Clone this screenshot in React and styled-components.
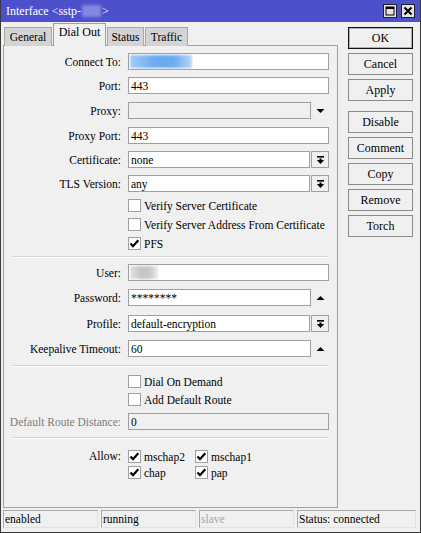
import React from 'react';
import styled, { createGlobalStyle, css } from 'styled-components';

const Global = createGlobalStyle`
  html, body { margin: 0; padding: 0; background: #f0f0f0; }
  body {
    font-family: "Liberation Serif", "Times New Roman", serif;
    font-size: 11.5px;
    color: #000;
  }
  * { box-sizing: border-box; }
`;

const Window = styled.div`
  width: 421px;
  height: 533px;
  border: 1px solid #3a3a3a;
  border-top: 0;
  background: #f0f0f0;
  display: flex;
  flex-direction: column;
`;

const TitleBar = styled.div`
  height: 22px;
  flex: none;
  background: #4d50cb;
  color: #fff;
  font-size: 12px;
  display: flex;
  align-items: center;
  padding: 0 5px 0 5px;
`;

const TitleText = styled.div`
  flex: 1;
  display: flex;
  align-items: center;
  white-space: pre;
`;

const TitleBlur = styled.span`
  display: inline-block;
  width: 19px;
  height: 12px;
  background: #8487e2;
  filter: blur(1.5px);
  margin: 0 1px;
`;

const TitleButtons = styled.div`
  display: flex;
  gap: 4px;
`;

const TitleButton = styled.div`
  width: 14px;
  height: 14px;
  background: #e4e4e4;
  border: 1px solid #222;
  display: flex;
  align-items: center;
  justify-content: center;
`;

const Main = styled.div`
  display: flex;
  flex: none;
  height: 486px;
`;

const LeftCol = styled.div`
  margin-left: 2px;
  width: 335px;
  display: flex;
  flex-direction: column;
`;

const Tabs = styled.div`
  display: flex;
  align-items: flex-end;
  height: 23px;
  margin-top: 1px;
  padding-left: 1px;
  position: relative;
  z-index: 1;
  margin-bottom: -1px;
`;

const Tab = styled.div`
  height: 19px;
  width: ${(p) => p.$w}px;
  display: flex;
  align-items: center;
  justify-content: center;
  white-space: nowrap;
  background: #d4d4d4;
  border: 1px solid #a8a8a8;
  border-bottom: 0;
  margin-right: 1px;
  ${(p) =>
    p.$active &&
    css`
      height: 23px;
      background: #f0f0f0;
      border-color: #a0a0a0;
      padding-bottom: 5px;
      font-size: 12px;
    `}
`;

const Panel = styled.div`
  flex: 1;
  border: 1px solid #a0a0a0;
  padding: 7px 0 0 0;
  display: flex;
  flex-direction: column;
`;

const Row = styled.div`
  display: flex;
  align-items: center;
  height: ${(p) => p.$h || 17}px;
  margin-top: ${(p) => p.$mt || 0}px;
`;

const Label = styled.div`
  width: 117px;
  text-align: right;
  margin-right: 7px;
  white-space: nowrap;
  color: ${(p) => (p.$disabled ? '#7d7d7d' : '#000')};
`;

const Spacer = styled.div`
  width: 124px;
  flex: none;
`;

const Input = styled.div`
  position: relative;
  width: ${(p) => p.$w || 201}px;
  height: 17px;
  border: 1px solid #a0a0a0;
  background: ${(p) => (p.$disabled ? '#f0f0f0' : '#fff')};
  padding-left: 2px;
  display: flex;
  align-items: center;
  white-space: nowrap;
  overflow: hidden;
`;

const BlurBlob = styled.div`
  position: absolute;
  left: 1px;
  top: 1px;
  height: 13px;
  width: ${(p) => p.$w}px;
  background: ${(p) => p.$bg};
  filter: blur(1px);
`;

const DropButton = styled.div`
  width: 18px;
  height: 17px;
  margin-left: 1px;
  border: 1px solid #a0a0a0;
  background: #f0f0f0;
  display: flex;
  align-items: center;
  justify-content: center;
`;

const ArrowSlot = styled.div`
  width: 18px;
  height: 17px;
  display: flex;
  align-items: center;
  justify-content: center;
`;

const Box = styled.div`
  width: 13px;
  height: 13px;
  border: 1px solid #a0a0a0;
  background: #fff;
  flex: none;
  display: flex;
  align-items: center;
  justify-content: center;
`;

const CheckText = styled.span`
  margin-left: 3px;
  white-space: nowrap;
`;

const CheckItem = styled.div`
  display: flex;
  align-items: center;
  height: 13px;
`;

const Separator = styled.div`
  margin: ${(p) => p.$mt}px 0 0 8px;
  width: 317px;
  height: 2px;
  border-top: 1px solid #d6d6d6;
  border-bottom: 1px solid #fbfbfb;
`;

const AllowGrid = styled.div`
  display: grid;
  grid-template-columns: 67px auto;
  row-gap: 3px;
`;

const AllowRow = styled.div`
  display: flex;
  align-items: flex-start;
  margin-top: ${(p) => p.$mt}px;
`;

const AllowLabel = styled(Label)`
  height: 13px;
  line-height: 13px;
`;

const RightCol = styled.div`
  padding: 5px 0 0 10px;
  display: flex;
  flex-direction: column;
`;

const Button = styled.div`
  width: 65px;
  height: 22px;
  margin-bottom: ${(p) => p.$mb ?? 4}px;
  border: 1px solid #8a8a8a;
  background: #f0f0f0;
  display: flex;
  align-items: center;
  justify-content: center;
  font-size: 12px;
  ${(p) =>
    p.$default &&
    css`
      border-color: #111;
      box-shadow: inset 0 0 0 1px #b0b0b0;
    `}
`;

const StatusBar = styled.div`
  display: flex;
  gap: 3px;
  margin-top: 2px;
  padding-left: 2px;
`;

const StatusCell = styled.div`
  width: ${(p) => p.$w}px;
  height: 18px;
  border-top: 1px solid #a8a8a8;
  border-left: 1px solid #a8a8a8;
  border-right: 1px solid #e2e2e2;
  border-bottom: 1px solid #e2e2e2;
  padding-left: 1px;
  display: flex;
  align-items: center;
  white-space: nowrap;
  color: ${(p) => (p.$muted ? '#a6a6a6' : '#000')};
`;

const Check = () => (
  <svg width="11" height="11" viewBox="0 0 11 11">
    <path d="M1.5 5.5 L4 8.2 L9.3 2.3" fill="none" stroke="#000" strokeWidth="2.2" />
  </svg>
);

const CheckBox = ({ checked, label }) => (
  <CheckItem>
    <Box>{checked && <Check />}</Box>
    <CheckText>{label}</CheckText>
  </CheckItem>
);

const DropIcon = () => (
  <svg width="9" height="10" viewBox="0 0 9 10">
    <rect x="1" y="1" width="7" height="1.6" fill="#000" />
    <rect x="3.5" y="3.5" width="2" height="2" fill="#000" />
    <polygon points="0.8,5 8.2,5 4.5,9" fill="#000" />
  </svg>
);

const TriDown = () => (
  <svg width="9" height="6" viewBox="0 0 9 6">
    <polygon points="0.5,1 8.5,1 4.5,5" fill="#000" />
  </svg>
);

const TriUp = () => (
  <svg width="9" height="6" viewBox="0 0 9 6">
    <polygon points="0.5,5 8.5,5 4.5,1" fill="#000" />
  </svg>
);

const MaxIcon = () => (
  <svg width="10" height="10" viewBox="0 0 10 10">
    <rect x="1" y="1" width="8" height="8" fill="none" stroke="#000" strokeWidth="1" />
    <rect x="1" y="1" width="8" height="2" fill="#000" />
  </svg>
);

const CloseIcon = () => (
  <svg width="10" height="10" viewBox="0 0 10 10">
    <path d="M1.5 1.5 L8.5 8.5 M8.5 1.5 L1.5 8.5" stroke="#000" strokeWidth="2" />
  </svg>
);

export default function App() {
  return (
    <>
      <Global />
      <Window>
        <TitleBar>
          <TitleText>
            Interface &lt;sstp-<TitleBlur />&gt;
          </TitleText>
          <TitleButtons>
            <TitleButton><MaxIcon /></TitleButton>
            <TitleButton><CloseIcon /></TitleButton>
          </TitleButtons>
        </TitleBar>
        <Main>
          <LeftCol>
            <Tabs>
              <Tab $w={48}>General</Tab>
              <Tab $w={53} $active>Dial Out</Tab>
              <Tab $w={37}>Status</Tab>
              <Tab $w={43}>Traffic</Tab>
            </Tabs>
            <Panel>
              <Row>
                <Label>Connect To:</Label>
                <Input>
                  <BlurBlob $w={62} $bg="linear-gradient(90deg,#a6cdf6,#6aaaf0 40%,#6aaaf0 70%,#b8d7f8)" />
                </Input>
              </Row>
              <Row $mt={7}>
                <Label>Port:</Label>
                <Input>443</Input>
              </Row>
              <Row $mt={8}>
                <Label>Proxy:</Label>
                <Input $w={183} $disabled />
                <ArrowSlot><TriDown /></ArrowSlot>
              </Row>
              <Row $mt={8}>
                <Label>Proxy Port:</Label>
                <Input>443</Input>
              </Row>
              <Row $mt={7}>
                <Label>Certificate:</Label>
                <Input $w={182}>none</Input>
                <DropButton><DropIcon /></DropButton>
              </Row>
              <Row $mt={7}>
                <Label>TLS Version:</Label>
                <Input $w={182}>any</Input>
                <DropButton><DropIcon /></DropButton>
              </Row>
              <Row $mt={7} $h={13}>
                <Spacer />
                <CheckBox label="Verify Server Certificate" />
              </Row>
              <Row $mt={6} $h={13}>
                <Spacer />
                <CheckBox label="Verify Server Address From Certificate" />
              </Row>
              <Row $mt={6} $h={13}>
                <Spacer />
                <CheckBox checked label="PFS" />
              </Row>
              <Separator $mt={6} />
              <Row $mt={6}>
                <Label>User:</Label>
                <Input>
                  <BlurBlob $w={28} $bg="linear-gradient(90deg,#e2e2e2,#c4c4c4 40%,#c8c8c8 70%,#ececec)" />
                </Input>
              </Row>
              <Row $mt={8}>
                <Label>Password:</Label>
                <Input $w={183}>********</Input>
                <ArrowSlot><TriUp /></ArrowSlot>
              </Row>
              <Row $mt={9}>
                <Label>Profile:</Label>
                <Input $w={182}>default-encryption</Input>
                <DropButton><DropIcon /></DropButton>
              </Row>
              <Row $mt={8}>
                <Label>Keepalive Timeout:</Label>
                <Input $w={183}>60</Input>
                <ArrowSlot><TriUp /></ArrowSlot>
              </Row>
              <Separator $mt={8} />
              <Row $mt={8} $h={13}>
                <Spacer />
                <CheckBox label="Dial On Demand" />
              </Row>
              <Row $mt={5} $h={13}>
                <Spacer />
                <CheckBox label="Add Default Route" />
              </Row>
              <Row $mt={7}>
                <Label $disabled>Default Route Distance:</Label>
                <Input $disabled>0</Input>
              </Row>
              <Separator $mt={7} />
              <AllowRow $mt={11}>
                <AllowLabel>Allow:</AllowLabel>
                <AllowGrid>
                  <CheckBox checked label="mschap2" />
                  <CheckBox checked label="mschap1" />
                  <CheckBox checked label="chap" />
                  <CheckBox checked label="pap" />
                </AllowGrid>
              </AllowRow>
            </Panel>
          </LeftCol>
          <RightCol>
            <Button $default>OK</Button>
            <Button>Cancel</Button>
            <Button $mb={10}>Apply</Button>
            <Button>Disable</Button>
            <Button>Comment</Button>
            <Button>Copy</Button>
            <Button>Remove</Button>
            <Button>Torch</Button>
          </RightCol>
        </Main>
        <StatusBar>
          <StatusCell $w={95}>enabled</StatusCell>
          <StatusCell $w={95}>running</StatusCell>
          <StatusCell $w={95} $muted>slave</StatusCell>
          <StatusCell $w={119}>Status: connected</StatusCell>
        </StatusBar>
      </Window>
    </>
  );
}
